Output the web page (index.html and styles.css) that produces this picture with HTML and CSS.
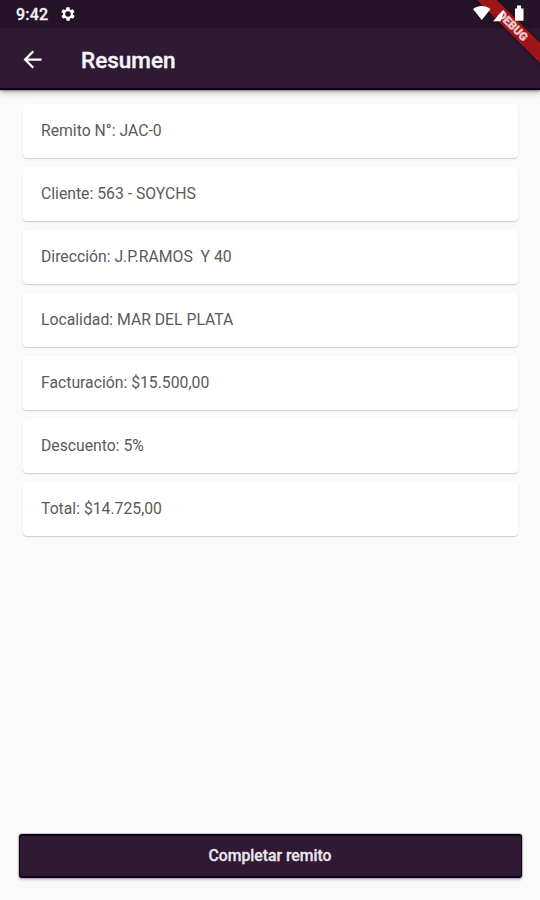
FILE: index.html
```
<!DOCTYPE html>
<html lang="es">
<head>
<meta charset="utf-8">
<title>Resumen</title>
<link rel="stylesheet" href="styles.css">
</head>
<body>
<div class="screen">
  <header class="top">
    <div class="status">
      <span class="clock">9:42</span>
      <svg class="gear" viewBox="0 0 24 24"><path fill="#fff" fill-rule="evenodd" d="M19.4 13c.1-.7.1-1.300 0-2l2.100-1.600c.2-.2.3-.4.100-.7l-2-3.400c-.1-.2-.4-.3-.6-.2l-2.500 1c-.5-.4-1.100-.7-1.700-1l-.4-2.600c0-.3-.2-.5-.5-.5h-4c-.2 0-.4.2-.5.500l-.4 2.600c-.6.3-1.200.6-1.700 1l-2.500-1c-.2-.1-.5 0-.6.200l-2 3.400c-.1.2-.1.5.1.700L4.600 11c-.1.700-.1 1.300 0 2l-2.100 1.600c-.2.2-.2.500-.1.700l2 3.400c.1.2.4.3.6.2l2.500-1c.5.4 1.100.7 1.700 1l.4 2.600c.1.3.3.5.5.500h4c.3 0 .5-.2.500-.5l.4-2.600c.6-.3 1.200-.6 1.700-1l2.500 1c.2.1.5 0 .6-.2l2-3.400c.1-.2.100-.5-.1-.7zM12 16.200a4.200 4.200 0 1 1 0-8.400 4.200 4.200 0 0 1 0 8.400z"/></svg>
      <svg class="signals" viewBox="0 0 52 16"><path fill="#fff" d="M0 3C5-1 12.500-1 17.500 3L8.800 14zM20 15.200L30.500 3.700v3.800L27.500 15.200zM42 2.500h2V-.6h4v3.100h2.500v12.300H42z"/></svg>
    </div>
    <div class="appbar">
      <svg class="back" viewBox="0 0 24 24"><path fill="#fff" d="M20 11H7.830l5.590-5.590L12 4l-8 8 8 8 1.410-1.410L7.830 13H20z"/></svg>
      <h1>Resumen</h1>
    </div>
    <div class="corner"><div class="banner">DEBUG</div></div>
  </header>
  <main class="cards">
    <div class="card">Remito N°: JAC-0</div>
    <div class="card">Cliente: 563 - SOYCHS</div>
    <div class="card">Dirección: J.P.RAMOS  Y 40</div>
    <div class="card">Localidad: MAR DEL PLATA</div>
    <div class="card">Facturación: $15.500,00</div>
    <div class="card">Descuento: 5%</div>
    <div class="card">Total: $14.725,00</div>
  </main>
  <button class="submit">Completar remito</button>
</div>
</body>
</html>
```
FILE: styles.css
```
* { box-sizing: border-box; }
body { margin: 0; font-family: Roboto, sans-serif; background: #fafafa; }
.screen { width: 540px; height: 900px; display: flex; flex-direction: column; overflow: hidden; }
.top {
  position: relative;
  height: 90px;
  flex: none;
  background: #2f1933;
  border-bottom: 2px solid #10001a;
  box-shadow: 0 1px 2px rgba(0,0,0,.4), 0 3px 6px rgba(0,0,0,.22);
}
.status { height: 28px; display: flex; align-items: center; padding: 0 15px 0 16px; background: #251428; }
.clock { width: 44px; color: #f4f0f5; font-size: 16px; font-weight: 500; letter-spacing: .2px; -webkit-text-stroke: .3px #f4f0f5; }
.gear { width: 16px; height: 16px; }
.signals { position: relative; z-index: 1; width: 52px; height: 16px; margin-left: auto; overflow: visible; }
.appbar { height: 60px; display: flex; align-items: center; padding: 3px 0 0 18.500px; }
.back { width: 27px; height: 27px; }
h1 { margin: 0 0 0 35.500px; color: #f7f4f8; font-size: 22.500px; font-weight: 500; line-height: 28px; -webkit-text-stroke: .4px #f7f4f8; }
.corner { position: absolute; top: 0; right: 0; width: 90px; height: 88px; overflow: hidden; }
.banner {
  position: absolute;
  left: 3.500px;
  top: 19.500px;
  width: 120px;
  height: 14px;
  transform: rotate(45deg);
  background: #9e1518;
  box-shadow: 0 0 6px rgba(0,0,0,.5);
  color: #edc8ce;
  font-size: 11.500px;
  font-weight: 900;
  line-height: 14px;
  text-align: center;
  text-indent: -3px;
  -webkit-text-stroke: .4px #edc8ce;
}
.cards { flex: 1; display: flex; flex-direction: column; gap: 9px; padding: 14px 22.500px 0 23px; }
.card {
  height: 54px;
  padding: 0 18px;
  border-radius: 4px;
  background: #fff;
  box-shadow: 0 1px 1px rgba(0,0,0,.14), 0 1px 3px rgba(0,0,0,.05);
  color: #5a5a5a;
  font-size: 15.750px;
  line-height: 54px;
  white-space: pre;
}
.submit {
  height: 44px;
  flex: none;
  margin: 0 18px 22.500px 19px;
  padding: 0 1px 0 0;
  border: 2px solid #12001b;
  border-left-width: 1px;
  border-right-width: 1px;
  border-radius: 3px;
  background: #2f1933;
  box-shadow: 0 0 1px 1px rgba(0,0,0,.2), 0 2px 3px rgba(0,0,0,.18);
  color: #ece5ee;
  font: 500 15.750px/40px Roboto, sans-serif;
  -webkit-text-stroke: .3px #ece5ee;
}
```
